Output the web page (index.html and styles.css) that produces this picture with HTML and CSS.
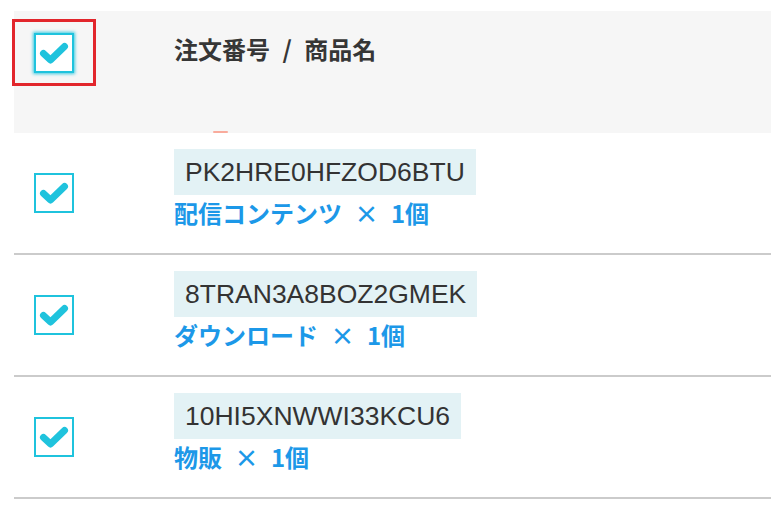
FILE: index.html
```html
<!DOCTYPE html>
<html lang="ja">
<head>
<meta charset="utf-8">
<title>注文一覧</title>
<link rel="stylesheet" href="styles.css">
</head>
<body>
<div class="table">
  <div class="head">
    <div class="check-cell">
      <span class="focus-ring">
        <span class="cb cb-focus">
          <svg width="40" height="40" viewBox="0 0 40 40"><rect x="1" y="1" width="38" height="38" fill="#fff" stroke="#1fc3dd" stroke-width="2"/><path d="M9.5 20.5 L16.5 27 L30.5 13.5" fill="none" stroke="#1fc3dd" stroke-width="7" stroke-linecap="round" stroke-linejoin="round"/></svg>
        </span>
      </span>
    </div>
    <div class="head-title">注文番号 / 商品名</div>
    <span class="mark"></span>
  </div>

  <div class="row">
    <div class="check-cell">
      <span class="cb">
        <svg width="40" height="40" viewBox="0 0 40 40"><rect x="1" y="1" width="38" height="38" fill="#fff" stroke="#1fc3dd" stroke-width="2"/><path d="M9.5 20.5 L16.5 27 L30.5 13.5" fill="none" stroke="#1fc3dd" stroke-width="7" stroke-linecap="round" stroke-linejoin="round"/></svg>
      </span>
    </div>
    <div class="info">
      <span class="code">PK2HRE0HFZOD6BTU</span>
      <div class="name">配信コンテンツ × 1個</div>
    </div>
  </div>

  <div class="row">
    <div class="check-cell">
      <span class="cb">
        <svg width="40" height="40" viewBox="0 0 40 40"><rect x="1" y="1" width="38" height="38" fill="#fff" stroke="#1fc3dd" stroke-width="2"/><path d="M9.5 20.5 L16.5 27 L30.5 13.5" fill="none" stroke="#1fc3dd" stroke-width="7" stroke-linecap="round" stroke-linejoin="round"/></svg>
      </span>
    </div>
    <div class="info">
      <span class="code">8TRAN3A8BOZ2GMEK</span>
      <div class="name">ダウンロード × 1個</div>
    </div>
  </div>

  <div class="row">
    <div class="check-cell">
      <span class="cb">
        <svg width="40" height="40" viewBox="0 0 40 40"><rect x="1" y="1" width="38" height="38" fill="#fff" stroke="#1fc3dd" stroke-width="2"/><path d="M9.5 20.5 L16.5 27 L30.5 13.5" fill="none" stroke="#1fc3dd" stroke-width="7" stroke-linecap="round" stroke-linejoin="round"/></svg>
      </span>
    </div>
    <div class="info">
      <span class="code">10HI5XNWWI33KCU6</span>
      <div class="name">物販 × 1個</div>
    </div>
  </div>
</div>
</body>
</html>
```

FILE: styles.css
```css
* { box-sizing: border-box; }
html, body { margin: 0; padding: 0; background: #fff; }
body {
  font-family: "Noto Sans CJK JP", "Liberation Sans", sans-serif;
  color: #333;
  overflow: hidden;
}
.table {
  margin: 11px 0 0 14px;
}
.head {
  position: relative;
  display: grid;
  grid-template-columns: 160px 1fr;
  height: 122px;
  background: #f6f6f6;
}
.head .check-cell {
  display: flex;
  align-items: flex-start;
}
.focus-ring {
  display: inline-flex;
  margin: 8px 0 0 -2px;
  padding: 11px 19px 10px 19px;
  border: 3px solid #e2262c;
}
.cb {
  display: block;
  width: 40px;
  height: 40px;
}
.cb svg { display: block; }
.cb-focus {
  box-shadow: 0 0 3px 1px rgba(31, 195, 221, 0.85);
}
.head-title {
  padding-top: 21px;
  font-size: 24px;
  line-height: 34px;
  font-weight: 700;
  word-spacing: 7px;
  color: #363636;
}
.mark {
  position: absolute;
  left: 199px;
  bottom: 0;
  width: 15px;
  height: 2px;
  border-radius: 1px;
  background: #f9ab9c;
}
.row {
  display: grid;
  grid-template-columns: 160px 1fr;
  height: 122px;
  border-bottom: 2px solid #cbcbcb;
}
.row .check-cell {
  display: flex;
  align-items: center;
  padding-left: 20px;
}
.info {
  padding-top: 16px;
}
.code {
  display: inline-block;
  height: 46px;
  padding: 0 11px;
  background: #e3f2f5;
  font-family: "Liberation Sans", Arial, sans-serif;
  font-size: 26.5px;
  line-height: 46px;
  color: #333;
}
.name {
  font-size: 24px;
  line-height: 36px;
  font-weight: 700;
  word-spacing: 7px;
  color: #1c98e8;
}
```
